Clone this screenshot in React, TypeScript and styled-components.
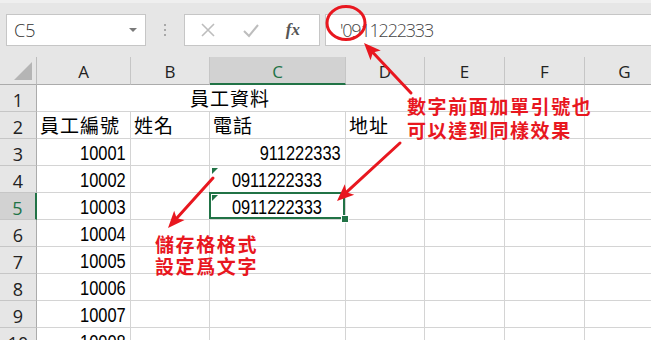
import * as React from 'react'
import styled, { createGlobalStyle, css } from 'styled-components'

const GREEN = '#217346'
const RED = '#e8171f'

const GlobalStyle = createGlobalStyle`
  body {
    margin: 0;
    background: #fff;
  }
`

const Page = styled.div`
  position: relative;
  width: 651px;
  height: 340px;
  overflow: hidden;
  background: #fff;
`

const TopBar = styled.div`
  display: flex;
  align-items: flex-start;
  height: 57px;
  padding: 11px 0 0 6px;
  box-sizing: border-box;
  background: #e6e6e6;
  border-top: 3px solid #efefef;
`

const NameBox = styled.div`
  position: relative;
  display: flex;
  align-items: center;
  width: 140px;
  height: 32px;
  padding-left: 7px;
  box-sizing: border-box;
  background: #fff;
  border: 1px solid #c6c6c6;
  font-family: 'Open Sans', 'Liberation Sans', sans-serif;
  font-weight: 300;
  font-size: 18px;
  color: #333;
`

const Caret = styled.span`
  margin-left: auto;
  margin-right: 8px;
  border-left: 4px solid transparent;
  border-right: 4px solid transparent;
  border-top: 4px solid #7a7a7a;
`

const Grip = styled.div`
  display: flex;
  flex-direction: column;
  gap: 3px;
  width: 38px;
  height: 32px;
  align-items: center;
  justify-content: center;
  span {
    width: 2px;
    height: 2px;
    background: #a8a8a8;
  }
`

const FxBox = styled.div`
  display: flex;
  align-items: center;
  justify-content: space-around;
  width: 136px;
  height: 32px;
  box-sizing: border-box;
  padding: 0 6px 0 2px;
  background: #fff;
  border: 1px solid #c6c6c6;
`

const Fx = styled.span`
  font-family: 'Liberation Serif', serif;
  font-style: italic;
  font-weight: bold;
  font-size: 17px;
  color: #555;
`

const FormulaInput = styled.div`
  flex: 1;
  display: flex;
  align-items: center;
  height: 32px;
  margin-left: 5px;
  padding-left: 14px;
  box-sizing: border-box;
  background: #fff;
  border: 1px solid #c6c6c6;
  border-right: none;
  font-family: 'Open Sans', 'Liberation Sans', sans-serif;
  font-weight: 300;
  font-size: 18px;
  letter-spacing: -1.2px;
  color: #444;
`

const Sheet = styled.div`
  display: grid;
  grid-template-columns: 37px 94px 79px 136px 79px 80px 80px 80px;
  grid-template-rows: 28px repeat(10, 27px);
`

const HeadBase = css<{ $active?: boolean }>`
  display: flex;
  align-items: center;
  justify-content: center;
  box-sizing: border-box;
  background: ${p => (p.$active ? '#d2d2d2' : '#e6e6e6')};
  color: ${p => (p.$active ? GREEN : '#222')};
  font-family: 'Open Sans', 'Liberation Sans', sans-serif;
`

const Corner = styled.div`
  position: relative;
  box-sizing: border-box;
  background: #e6e6e6;
  border-right: 1px solid #bdbdbd;
  border-bottom: 1px solid #ababab;
  &::after {
    content: '';
    position: absolute;
    right: 4px;
    bottom: 4px;
    border-left: 18px solid transparent;
    border-bottom: 18px solid #b5b5b5;
  }
`

const ColHead = styled.div<{ $active?: boolean }>`
  ${HeadBase};
  font-size: 17px;
  padding-top: 2px;
  border-right: 1px solid #c6c6c6;
  border-bottom: ${p => (p.$active ? `2px solid ${GREEN}` : '1px solid #ababab')};
`

const RowHead = styled.div<{ $active?: boolean }>`
  ${HeadBase};
  font-size: 18px;
  padding-top: 3px;
  border-bottom: 1px solid #c6c6c6;
  border-right: ${p => (p.$active ? `2px solid ${GREEN}` : '1px solid #ababab')};
`

type Align = 'left' | 'right' | 'center'

const Cell = styled.div<{
  $align?: Align
  $span?: number
  $flag?: boolean
  $selected?: boolean
}>`
  position: relative;
  display: flex;
  align-items: flex-end;
  justify-content: ${p =>
    p.$align === 'right' ? 'flex-end' : p.$align === 'center' ? 'center' : 'flex-start'};
  grid-column: ${p => (p.$span ? `span ${p.$span}` : 'auto')};
  padding: 0 4px 1px 3px;
  box-sizing: border-box;
  border-right: 1px solid #d4d4d4;
  border-bottom: 1px solid #d4d4d4;
  color: #000;
  white-space: nowrap;

  ${p =>
    p.$flag &&
    css`
      &::before {
        content: '';
        position: absolute;
        left: 2px;
        top: 2px;
        border-top: 6px solid ${GREEN};
        border-right: 6px solid transparent;
      }
    `}

  ${p =>
    p.$selected &&
    css`
      &::after {
        content: '';
        position: absolute;
        inset: -1px 0 0 -1px;
        border: 2px solid ${GREEN};
      }
    `}
`

const FillHandle = styled.span`
  position: absolute;
  right: -4px;
  bottom: -4px;
  width: 6px;
  height: 6px;
  background: ${GREEN};
  border: 1px solid #fff;
  z-index: 2;
`

const CjkText = styled.span`
  font-family: 'Noto Sans CJK TC', sans-serif;
  font-size: 19px;
  line-height: 24px;
  letter-spacing: 1px;
`

/* the sheet's narrow Ming digits: a condensed sans */
const NumText = styled.span<{ $align?: Align }>`
  display: inline-block;
  font-family: 'Liberation Sans', sans-serif;
  font-size: 20px;
  line-height: 22px;
  transform: scaleX(0.82);
  transform-origin: ${p => (p.$align === 'right' ? 'right' : 'center')} bottom;
`

const Overlay = styled.svg`
  position: absolute;
  left: 0;
  top: 0;
  pointer-events: none;
`

const Note = styled.div<{ $x: number; $y: number; $lh: number }>`
  position: absolute;
  left: ${p => p.$x}px;
  top: ${p => p.$y}px;
  font-family: 'Noto Sans CJK TC', sans-serif;
  font-weight: bold;
  font-size: 19px;
  line-height: ${p => p.$lh}px;
  letter-spacing: 1.6px;
  color: ${RED};
  white-space: nowrap;
`

type CellData = { text?: string; align?: Align; span?: number; flag?: boolean; selected?: boolean; cjk?: boolean }

const blank = (n: number): CellData[] => Array.from({ length: n }, () => ({}))

const rows: CellData[][] = [
  [{ text: '員工資料', align: 'center', span: 4, cjk: true }, ...blank(3)],
  [
    { text: '員工編號', cjk: true },
    { text: '姓名', cjk: true },
    { text: '電話', cjk: true },
    { text: '地址', cjk: true },
    ...blank(3),
  ],
  [{ text: '10001', align: 'right' }, {}, { text: '911222333', align: 'right' }, ...blank(4)],
  [{ text: '10002', align: 'right' }, {}, { text: '0911222333', align: 'center', flag: true }, ...blank(4)],
  [
    { text: '10003', align: 'right' },
    {},
    { text: '0911222333', align: 'center', flag: true, selected: true },
    ...blank(4),
  ],
  [{ text: '10004', align: 'right' }, ...blank(6)],
  [{ text: '10005', align: 'right' }, ...blank(6)],
  [{ text: '10006', align: 'right' }, ...blank(6)],
  [{ text: '10007', align: 'right' }, ...blank(6)],
  [{ text: '10008', align: 'right' }, ...blank(6)],
]

const columns = ['A', 'B', 'C', 'D', 'E', 'F', 'G']

const Arrow: React.FC<{ from: [number, number]; to: [number, number] }> = ({ from, to }) => {
  const dx = to[0] - from[0]
  const dy = to[1] - from[1]
  const len = Math.hypot(dx, dy)
  const ux = dx / len
  const uy = dy / len
  const head = 17
  const half = 7
  const bx = to[0] - ux * head
  const by = to[1] - uy * head
  const nx = to[0] - ux * (head - 4)
  const ny = to[1] - uy * (head - 4)
  const pts = [
    [to[0], to[1]],
    [bx - uy * half, by + ux * half],
    [nx, ny],
    [bx + uy * half, by - ux * half],
  ]
    .map(p => p.join(','))
    .join(' ')
  return (
    <g>
      <line x1={from[0]} y1={from[1]} x2={nx} y2={ny} stroke={RED} strokeWidth={3} strokeLinecap="round" />
      <polygon points={pts} fill={RED} />
    </g>
  )
}

const App: React.FC = () => (
  <Page>
    <GlobalStyle />
    <TopBar>
      <NameBox>
        C5
        <Caret />
      </NameBox>
      <Grip>
        <span />
        <span />
        <span />
      </Grip>
      <FxBox>
        <svg width="16" height="16" viewBox="0 0 16 16">
          <path d="M2 2 L14 14 M14 2 L2 14" stroke="#bdbdbd" strokeWidth="1.6" fill="none" />
        </svg>
        <svg width="18" height="16" viewBox="0 0 18 16">
          <path d="M2 9 L7 14 L16 3" stroke="#bdbdbd" strokeWidth="2" fill="none" />
        </svg>
        <Fx>fx</Fx>
      </FxBox>
      <FormulaInput>'0911222333</FormulaInput>
    </TopBar>

    <Sheet>
      <Corner />
      {columns.map(c => (
        <ColHead key={c} $active={c === 'C'}>
          {c}
        </ColHead>
      ))}
      {rows.map((row, i) => (
        <React.Fragment key={i}>
          <RowHead $active={i === 4}>{i + 1}</RowHead>
          {row.map((cell, j) =>
            i === 0 && j > 0 ? (
              <Cell key={j} />
            ) : (
              <Cell
                key={j}
                $align={cell.align}
                $span={cell.span}
                $flag={cell.flag}
                $selected={cell.selected}
              >
                {cell.text &&
                  (cell.cjk ? (
                    <CjkText>{cell.text}</CjkText>
                  ) : (
                    <NumText $align={cell.align}>{cell.text}</NumText>
                  ))}
                {cell.selected && <FillHandle />}
              </Cell>
            )
          )}
        </React.Fragment>
      ))}
    </Sheet>

    <Overlay width={651} height={340}>
      <ellipse cx={346} cy={23} rx={19} ry={16.5} stroke={RED} strokeWidth={3} fill="none" />
      <Arrow from={[411, 93]} to={[364, 43]} />
      <Arrow from={[400, 143]} to={[337, 201]} />
      <Arrow from={[213, 178]} to={[168, 228]} />
    </Overlay>

    <Note $x={407} $y={94} $lh={24}>
      數字前面加單引號也
      <br />
      可以達到同樣效果
    </Note>
    <Note $x={155} $y={233} $lh={22}>
      儲存格格式
      <br />
      設定爲文字
    </Note>
  </Page>
)

export default App
